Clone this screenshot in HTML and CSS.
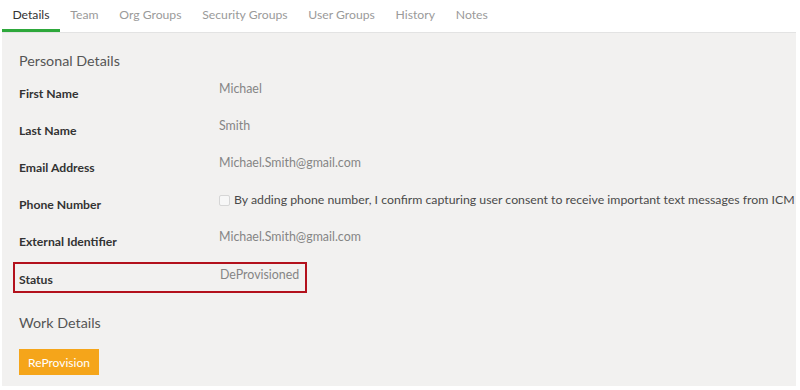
FILE: index.html
```html
<!DOCTYPE html>
<html lang="en">
<head>
    <meta charset="UTF-8">
    <meta name="viewport" content="width=device-width, initial-scale=1.0">
    <title>User Details</title>
    <link rel="stylesheet" href="styles.css">
</head>
<body>
    <nav class="tabs">
        <a class="tab active">Details</a>
        <a class="tab">Team</a>
        <a class="tab">Org Groups</a>
        <a class="tab">Security Groups</a>
        <a class="tab">User Groups</a>
        <a class="tab">History</a>
        <a class="tab">Notes</a>
    </nav>

    <div class="panel">
        <h2 class="section-title">Personal Details</h2>

        <div class="row">
            <div class="label">First Name</div>
            <div class="value">Michael</div>
        </div>
        <div class="row">
            <div class="label">Last Name</div>
            <div class="value">Smith</div>
        </div>
        <div class="row">
            <div class="label">Email Address</div>
            <div class="value">Michael.Smith@gmail.com</div>
        </div>
        <div class="row">
            <div class="label">Phone Number</div>
            <div class="value consent">
                <span class="checkbox"></span>
                By adding phone number, I confirm capturing user consent to receive important text messages from ICM
            </div>
        </div>
        <div class="row">
            <div class="label">External Identifier</div>
            <div class="value">Michael.Smith@gmail.com</div>
        </div>
        <div class="row status-row">
            <div class="label">Status</div>
            <div class="value">DeProvisioned</div>
        </div>

        <h2 class="section-title work">Work Details</h2>
        <button class="btn-reprovision">ReProvision</button>
    </div>
</body>
</html>
```

FILE: styles.css
```css
body {
    margin: 0;
    background: #fff;
    font-family: Lato, "Noto Sans", Arial, sans-serif;
    color: #333;
}
.tabs {
    display: flex;
    height: 32px;
    padding-left: 2px;
}
.tab {
    display: block;
    padding: 5px 10.4px 0;
    font-size: 12.2px;
    line-height: 20px;
    color: #9a9a9a;
}
.tab.active {
    color: #333;
    border-bottom: 3px solid #2ea83b;
    height: 24px;
}
.panel {
    margin: 0 4px 4px 2px;
    height: 353px;
    background: #f2f1f0;
    border-top: 1px solid #e3e3e3;
    padding-left: 17px;
}
.section-title {
    margin: 0;
    padding-top: 18px;
    font-size: 14.3px;
    font-weight: normal;
    line-height: 20px;
    color: #555;
}
.section-title.work {
    padding-top: 20px;
}
.row {
    display: flex;
    height: 37px;
    align-items: flex-start;
}
.label {
    width: 200px;
    flex-shrink: 0;
    padding-top: 15px;
    font-size: 12.2px;
    font-weight: bold;
    line-height: 16px;
    color: #333;
}
.value {
    padding-top: 10px;
    font-size: 12.4px;
    line-height: 16px;
    color: #858585;
    white-space: nowrap;
}
.consent {
    display: flex;
    align-items: center;
    gap: 4px;
    font-size: 12.3px;
    color: #4a4a4a;
}
.checkbox {
    width: 9px;
    height: 9px;
    border: 1px solid #d6d6d6;
    border-radius: 2px;
    background: #f7f7f7;
}
.status-row {
    width: 286px;
    height: 27px;
    margin: 6px 0 0 -6px;
    padding-left: 4px;
    border: 2px solid #b3111c;
}
.status-row .label {
    padding-top: 8px;
    width: 201px;
}
.status-row .value {
    padding-top: 3px;
}
.btn-reprovision {
    margin-top: 16px;
    width: 80px;
    height: 26px;
    border: none;
    background: #f5a51a;
    color: #fff;
    font-family: inherit;
    font-size: 12px;
    padding: 0;
}
```
